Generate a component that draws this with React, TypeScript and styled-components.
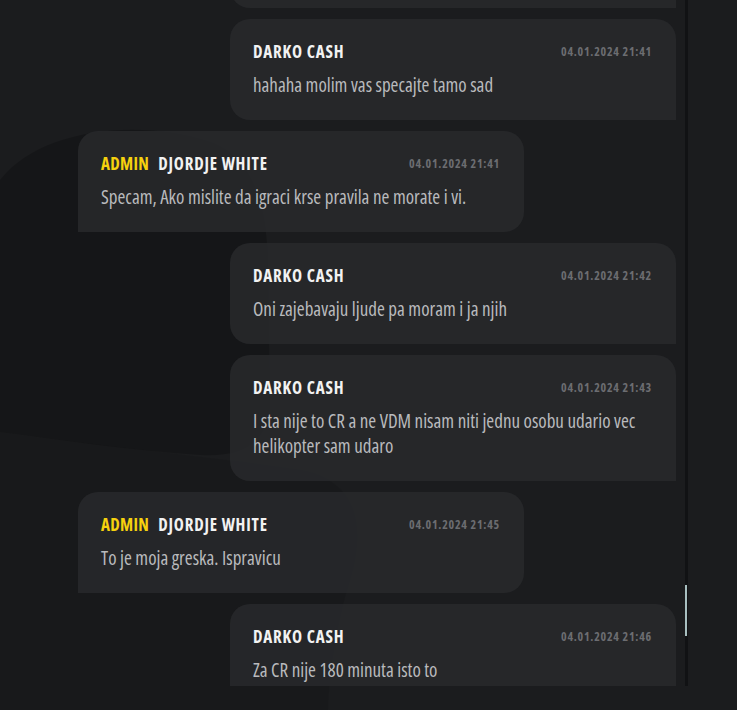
import styled, { createGlobalStyle } from "styled-components";

type Message = {
  id: number;
  author: string;
  admin?: boolean;
  time: string;
  text: string;
};

const MESSAGES: Message[] = [
  { id: 1, author: "DARKO CASH", time: "04.01.2024 21:41", text: "hahaha molim vas specajte tamo sad" },
  {
    id: 2,
    author: "DJORDJE WHITE",
    admin: true,
    time: "04.01.2024 21:41",
    text: "Specam, Ako mislite da igraci krse pravila ne morate i vi.",
  },
  { id: 3, author: "DARKO CASH", time: "04.01.2024 21:42", text: "Oni zajebavaju ljude pa moram i ja njih" },
  {
    id: 4,
    author: "DARKO CASH",
    time: "04.01.2024 21:43",
    text: "I sta nije to CR a ne VDM nisam niti jednu osobu udario vec helikopter sam udaro",
  },
  { id: 5, author: "DJORDJE WHITE", admin: true, time: "04.01.2024 21:45", text: "To je moja greska. Ispravicu" },
  { id: 6, author: "DARKO CASH", time: "04.01.2024 21:46", text: "Za CR nije 180 minuta isto to" },
];

const GlobalStyle = createGlobalStyle`
  html, body {
    margin: 0;
    padding: 0;
    background: #1b1c1e;
  }
  body {
    font-family: "Open Sans", "Noto Sans", sans-serif;
    font-stretch: 75%;
  }
`;

const App = () => {
  return (
    <>
      <GlobalStyle />
      <Page>
        {/* faint logo watermark behind the chat */}
        <Watermark viewBox="0 0 737 710" aria-hidden>
          <path
            d="M0 180 C 40 128, 140 118, 210 142 C 255 158, 268 210, 268 270 L 270 400 C 270 440, 245 458, 200 455 C 130 450, 60 440, 0 432 Z"
            fill="#000"
            opacity="0.2"
          />
          <path
            d="M0 432 C 90 445, 200 455, 300 470 C 360 480, 365 530, 350 580 C 335 630, 330 670, 328 710 L 0 710 Z"
            fill="#000"
            opacity="0.08"
          />
        </Watermark>
        <ChatFrame>
          <MessageList>
            <PartialBubble />
            {MESSAGES.map((m) => (
              <Bubble key={m.id} $admin={m.admin}>
                <BubbleHeader>
                  <Names>
                    {m.admin && <Role>ADMIN</Role>}
                    <Author>{m.author}</Author>
                  </Names>
                  <Time>{m.time}</Time>
                </BubbleHeader>
                <Body>{m.text}</Body>
              </Bubble>
            ))}
          </MessageList>
          <ScrollTrack>
            <ScrollThumb $offset={585} />
          </ScrollTrack>
        </ChatFrame>
      </Page>
    </>
  );
};

export default App;

const Page = styled.div`
  position: relative;
  width: 737px;
  height: 710px;
  overflow: hidden;
  background: #1b1c1e;
`;

const Watermark = styled.svg`
  position: absolute;
  inset: 0;
  width: 100%;
  height: 100%;
  pointer-events: none;
`;

const ChatFrame = styled.div`
  position: relative;
  display: flex;
  width: 688px;
  height: 686px;
`;

const MessageList = styled.div`
  flex: 1;
  display: flex;
  flex-direction: column;
  gap: 11px;
  overflow: hidden;
  padding: 0 9px 0 78px;
`;

const Bubble = styled.div<{ $admin?: boolean }>`
  box-sizing: border-box;
  width: 446px;
  flex-shrink: 0;
  align-self: ${({ $admin }) => ($admin ? "flex-start" : "flex-end")};
  display: flex;
  flex-direction: column;
  gap: 12px;
  padding: 22px 24px 22px 23px;
  background: rgba(40, 41, 44, 0.85);
  border-radius: ${({ $admin }) => ($admin ? "20px 20px 20px 0" : "20px 20px 0 20px")};
`;

const PartialBubble = styled(Bubble)`
  height: 101px;
  margin-top: -93px;
`;

const BubbleHeader = styled.div`
  display: flex;
  align-items: center;
  justify-content: space-between;
  height: 20px;
`;

const Names = styled.div`
  display: flex;
  align-items: center;
  gap: 9px;
`;

const Role = styled.span`
  color: #f6d10e;
  font-size: 17px;
  font-weight: 700;
  letter-spacing: 0.3px;
`;

const Author = styled.span`
  color: #f2f2f2;
  font-size: 17px;
  font-weight: 700;
  letter-spacing: 0.8px;
`;

const Time = styled.span`
  color: #6c6d71;
  font-size: 12px;
  font-weight: 700;
  letter-spacing: 0.75px;
`;

const Body = styled.p`
  margin: 0;
  color: #b9babd;
  font-size: 19px;
  line-height: 25px;
`;

const ScrollTrack = styled.div`
  width: 3px;
  height: 686px;
  background: #111214;
`;

const ScrollThumb = styled.div<{ $offset: number }>`
  width: 2px;
  height: 51px;
  margin-top: ${({ $offset }) => $offset}px;
  background: #a8bfc0;
`;
